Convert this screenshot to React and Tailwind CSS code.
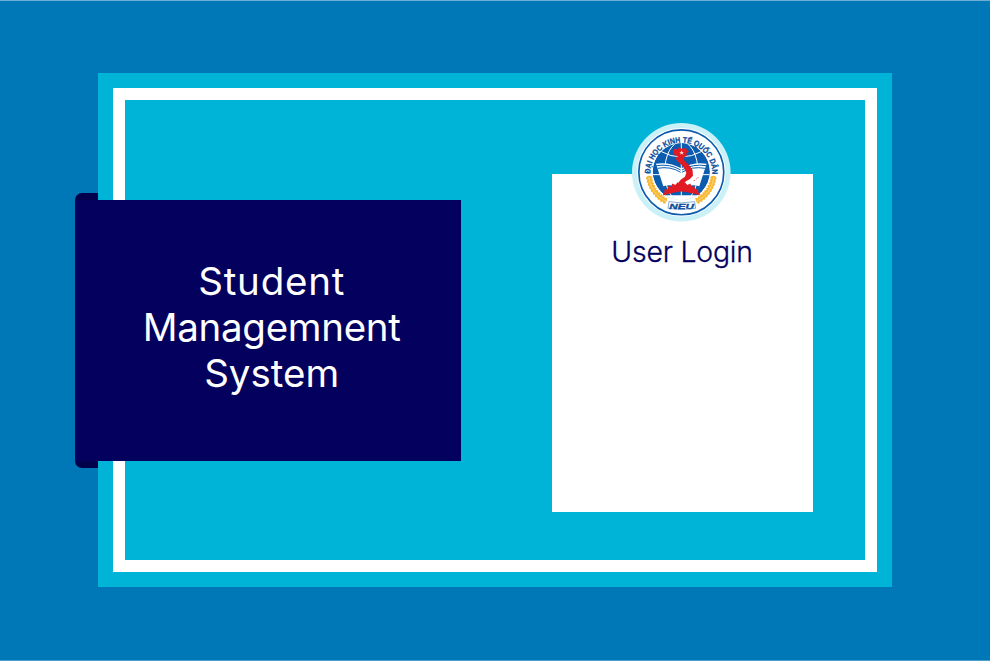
import React from "react";

const wheat = Array.from({ length: 10 }, (_, i) => 171 - i * 5.6);

function WheatEar() {
  return (
    <g>
      <path d="M68 176A98 98 0 0 0 121 251" fill="none" stroke="#f9c14b" strokeWidth="13" />
      {wheat.map((a) => (
        <g key={a} transform={`rotate(${a} 166 163)`} fill="#f7b731">
          <ellipse cx="260" cy="163" rx="6.5" ry="3.6" transform="rotate(35 260 163)" />
          <ellipse cx="268" cy="163" rx="6.5" ry="3.6" transform="rotate(-35 268 163)" />
        </g>
      ))}
      <path d="M68 178A98 98 0 0 0 119 250" fill="none" stroke="#fff" strokeOpacity="0.55" strokeWidth="2" />
    </g>
  );
}

function Emblem() {
  return (
    <svg viewBox="18 15 296 296" className="block h-[98.6px] w-[98.6px]" aria-label="NEU">
      <defs>
        <path id="motto" d="M 73 167 A 93 93 0 1 1 259 167" />
        <clipPath id="globe"><circle cx="166" cy="161" r="86" /></clipPath>
      </defs>
      <circle cx="166" cy="163" r="148" fill="#caf0f8" />
      <circle cx="166" cy="163" r="133" fill="#fff" />
      <circle cx="166" cy="163" r="127.5" fill="none" stroke="#0b5cae" strokeWidth="5" />
      <g clipPath="url(#globe)">
        <circle cx="166" cy="161" r="86" fill="#0b5cae" />
        <g fill="none" stroke="#fff" strokeWidth="3">
          <path d="M166 74V240M80 170H250M104 100Q166 134 228 100" />
          <ellipse cx="166" cy="161" rx="50" ry="90" />
        </g>
        <path d="M90 137Q130 131 166 151Q202 131 242 137L220 205Q195 196 166 214Q137 196 112 205Z" fill="#fff" />
        <path d="M91 143Q132 137 164 156M95 151Q134 144 164 163M241 143Q200 137 168 156M237 151Q198 144 168 163" fill="none" stroke="#0b5cae" strokeWidth="3" />
        <path d="M60 246Q88 222 106 222L112 232H220L226 222Q244 222 272 246V260H60Z" fill="#fff" />
      </g>
      <path d="M115 226L116 213L124 215L127 204L135 207L139 197L148 201L155 193L166 198L177 193L184 201L193 197L197 207L205 204L208 215L216 213L218 226L222 226L221 233Q205 226 196 226Q166 216 136 226Q128 227 112 233L111 226Z" fill="#e01b24" />
      <path d="M141 101L145 92L155 95L158 88L167 92L180 89L183 97L189 100L181 106L183 113L174 118L172 122L178 131L190 142L200 157L201 173L192 183L180 190L171 200L160 205L158 193L165 185L177 176L181 165L175 151L165 139L154 130L149 121L156 115L146 112Z" fill="#e01b24" />
      <path d="M167 97l2 5h5l-4 3 2 5-5-3-4 3 1-5-4-3h5z" fill="#ffd8c0" />
      <path d="M203 188l4-1M210 183l3-1M216 177l1 3" stroke="#e01b24" strokeWidth="2" />
      <text fill="#0b4d9c" stroke="#0b4d9c" strokeWidth="0.8" fontFamily="Liberation Sans, Arial, sans-serif" fontWeight="700" fontSize="24">
        <textPath href="#motto" textLength="294" lengthAdjust="spacingAndGlyphs">ĐẠI HỌC KINH TẾ QUỐC DÂN</textPath>
      </text>
      <WheatEar />
      <g transform="translate(332 0) scale(-1 1)"><WheatEar /></g>
      <path d="M129 251Q166 259 206 251L209 271Q166 279 126 271Z" fill="#fff" stroke="#0b5cae" strokeWidth="1.5" />
      <text x="167" y="273" textAnchor="middle" textLength="74" lengthAdjust="spacingAndGlyphs" fill="#0b4d9c" stroke="#0b4d9c" strokeWidth="1" fontFamily="Liberation Sans, Arial, sans-serif" fontWeight="700" fontStyle="italic" fontSize="23">NEU</text>
    </svg>
  );
}

export default function App() {
  return (
    <main className="h-[661px] w-[990px] overflow-hidden border-t border-b border-t-[#6faed4] border-b-[#4ba0cf] bg-[#0077b6] pt-[72px] font-['Inter',sans-serif]">
      <div className="ml-[98px] h-[514.4px] w-[794px] bg-[#00b4d8] p-[15px]">
        <div className="flex h-full items-start border-[12px] border-white">
          <div className="-ml-[50px] mt-[93px] flex h-[275px] w-[387px] items-center">
            <div className="h-full w-[23px] shrink-0 rounded-l-[7px] bg-[#03004c]" />
            <div className="-ml-[23px] flex h-[261px] w-[386.4px] shrink-0 items-center justify-center bg-[#03005e]">
              <h1 className="flex flex-col items-center pb-[7px] pl-[7px] text-[38.5px] leading-[46px] font-normal whitespace-nowrap text-white">
                <span className="tracking-[0.8px]">Student</span>
                <span className="tracking-[-0.3px]">Managemnent</span>
                <span>System</span>
              </h1>
            </div>
          </div>
          <section className="mt-[74.4px] ml-[90px] flex h-[337.6px] w-[261px] flex-col items-center bg-white">
            <div className="-mt-[51px] mr-[2px]"><Emblem /></div>
            <h2 className="mt-[11.6px] mr-px text-[28.4px] leading-[36px] font-light tracking-[-0.2px] whitespace-nowrap text-[#03005e] [-webkit-text-stroke:0.3px_#03005e]">User Login</h2>
          </section>
        </div>
      </div>
    </main>
  );
}
